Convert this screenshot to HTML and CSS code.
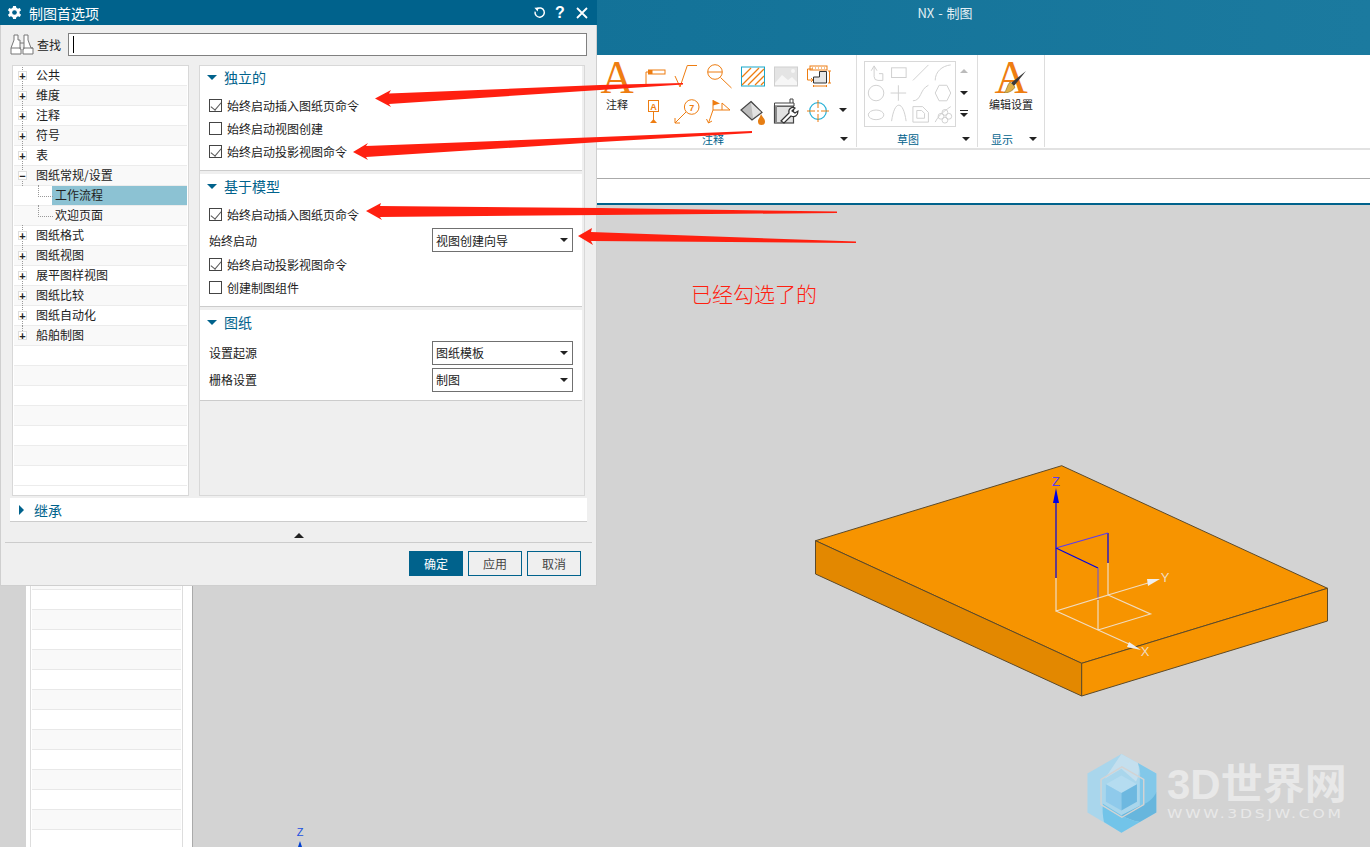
FILE: index.html
```html
<!DOCTYPE html>
<html lang="zh-CN">
<head>
    <meta charset="UTF-8">
    <meta name="viewport" content="width=device-width, initial-scale=1.0">
    <title>NX - 制图</title>
    <link rel="stylesheet" href="styles.css">
</head>
<body>
    <div class="app">
        <div class="titlebar">NX - 制图</div>

        <div class="ribbon">
            <div class="group group-notes">
                <div class="group-body">
                    <div class="big-tool notes-tool">
                        <span class="big-a">A</span>
                        <span class="tool-label">注释</span>
                    </div>
                    <div class="tool-grid">
                        <svg class="tool" viewBox="0 0 33 35"><rect x="11.5" y="11" width="16.5" height="4" fill="#fff" stroke="#ee7d11"/><rect x="11.5" y="11" width="4" height="4" fill="#ee7d11"/><path d="M11 13H9V26M5 25.5H13" fill="none" stroke="#ee7d11"/></svg>
                        <svg class="tool" viewBox="0 0 33 35"><path d="M5 17L10 28L17.3 6.5H27" fill="none" stroke="#ee7d11"/></svg>
                        <svg class="tool" viewBox="0 0 33 35"><circle cx="12" cy="13" r="7.3" fill="none" stroke="#ee7d11"/><path d="M5 13H19M17.500 18.500L28.500 29" fill="none" stroke="#ee7d11"/></svg>
                        <svg class="tool" viewBox="0 0 33 35"><rect x="5.500" y="8" width="23" height="19" fill="#fff" stroke="#19a7c9"/><path d="M6 18L15 9M6 26L23 9M12 26L28 10M19 26L28 17M25 26L28 23" stroke="#ee7d11" stroke-width="1.300"/></svg>
                        <svg class="tool" viewBox="0 0 33 35"><rect x="5.500" y="8" width="23" height="19" fill="#e4e4e4" stroke="#cfcfcf"/><path d="M6 24L13 16L19 21L23 18L28 23V26H6Z" fill="#f6f6f6"/><circle cx="24" cy="12" r="2" fill="#f6f6f6"/></svg>
                        <svg class="tool" viewBox="0 0 33 35"><rect x="8" y="7" width="17" height="4" fill="#fff" stroke="#ee7d11"/><path d="M10 9H11M13 9H14M16 9H17M19 9H20M22 9H23" stroke="#ee7d11"/><path d="M11 10H5.500V21H11M9 19L11 21L9 23" fill="none" stroke="#ee7d11"/><path d="M11.500 24V18H17.500V12.500H24.500V24Z" fill="#e6e6e6" stroke="#333"/><path d="M27.500 12V24M26 12H29M26 24H29M11.500 27H24.500M11.500 26V28M24.500 26V28" stroke="#ee7d11"/></svg>

                        <svg class="tool" viewBox="0 0 33 35"><rect x="11.500" y="6.500" width="10" height="11" fill="#fff" stroke="#ee7d11"/><text x="16.500" y="15.500" class="mini-text" text-anchor="middle">A</text><path d="M16.500 17.500V26" stroke="#ee7d11"/><path d="M13 29H20L16.500 25Z" fill="#ee7d11"/></svg>
                        <svg class="tool" viewBox="0 0 33 35"><circle cx="21.700" cy="13" r="7.300" fill="#fff" stroke="#ee7d11"/><text x="21.700" y="16.500" class="mini-text" text-anchor="middle">7</text><path d="M16 18L5 29M5 24V29H10" fill="none" stroke="#ee7d11"/></svg>
                        <svg class="tool" viewBox="0 0 33 35"><path d="M10 6L17 9.500L10 11.500Z" fill="#ee7d11"/><path d="M10 6V16L5.500 29M3.500 25L5.500 29L9 27M10 16H27L19 9V16" fill="none" stroke="#ee7d11"/></svg>
                        <svg class="tool" viewBox="0 0 33 35"><path d="M15 7.500L26 18.500L16 26L5 16Z" fill="#bdbdbd" stroke="#444" stroke-width="1.200"/><path d="M15 9L25 18L17 24Z" fill="#e2e2e2"/><path d="M25 20C27 24 29 25 29 27.500A3.500 3.500 0 0 1 22 27.500C22 25 24 24 25 20Z" fill="#e67e13"/></svg>
                        <svg class="tool" viewBox="0 0 33 35"><rect x="5.500" y="12" width="19" height="17" fill="#e2e2e2" stroke="#444" stroke-width="1.200"/><path d="M5.500 12H25V9H5.500ZM21 9V5H24V9" fill="#fff" stroke="#444"/><path d="M7 12V29" stroke="#888" stroke-width="2"/><path d="M12 27L20 19C19 15 23 12 26 14L23 17L26 19L29 17C29 21 26 24 22 22L15 29Z" fill="#fff" stroke="#333" stroke-width="1.200"/></svg>
                        <svg class="tool" viewBox="0 0 33 35"><circle cx="16" cy="17" r="8.300" fill="none" stroke="#27b0d6" stroke-width="1.200"/><path d="M5 17H13M19 17H27M16 6V14M16 20V28M15 17H17" stroke="#ee7d11"/></svg>
                        <span class="caret more-caret"></span>
                    </div>
                </div>
                <div class="group-label notes-label"><span>注释</span><span class="caret"></span></div>
            </div>

            <div class="group group-sketch">
                <div class="group-body">
                    <svg class="gallery" viewBox="0 0 92 66">
                        <g fill="none" stroke="#cfcfcf">
                            <path d="M9 5V15Q9 19 13 19H18V12H14M6 9L9 4L12 9"/>
                            <rect x="27" y="6" width="15" height="10"/>
                            <path d="M49 19L65 3"/>
                            <path d="M72 19C72 10 79 4 88 3"/>
                            <circle cx="11" cy="32" r="8"/>
                            <path d="M26 32H42M34 24V40"/>
                            <path d="M49 40C58 40 56 28 65 24"/>
                            <path d="M76 24H84L88 32L84 40H76L72 32Z"/>
                            <ellipse cx="11" cy="54.500" rx="8" ry="5"/>
                            <path d="M27 61C30 39 39 39 42 61"/>
                            <path d="M49 46H59L65 52V62H49ZM53 50H58L61 53V58H53Z"/>
                            <path d="M72 62C75 56 79 52 88 46"/>
                            <circle cx="82" cy="52" r="3"/><circle cx="86" cy="56" r="3"/><circle cx="78" cy="56" r="3"/><circle cx="82" cy="60" r="3"/>
                        </g>
                    </svg>
                    <div class="gallery-scroll">
                        <span class="caret caret-up"></span>
                        <span class="caret"></span>
                        <span class="caret caret-line"></span>
                    </div>
                </div>
                <div class="group-label sketch-label"><span>草图</span><span class="caret"></span></div>
            </div>

            <div class="group group-display">
                <div class="group-body">
                    <div class="big-tool display-tool">
                        <div class="brush-a">
                            <span class="big-a">A</span>
                            <svg class="brush" viewBox="0 0 22 22"><path d="M22 0L7 12L10 15Z" fill="#3a3a3a"/><path d="M6 11L11 16C9 20 4 22 0 22C3 19 3 14 6 11Z" fill="#e0b24a" stroke="#8a6a20" stroke-width=".6"/></svg>
                        </div>
                        <span class="tool-label">编辑设置</span>
                    </div>
                </div>
                <div class="group-label display-label"><span>显示</span><span class="caret"></span></div>
            </div>
        </div>

        <div class="toolbar-row"></div>
        <div class="toolbar-row short"></div>

        <div class="workspace">
            <div class="side">
                <div class="side-list"></div>
            </div>
        </div>
    </div>

    <svg class="part" viewBox="0 0 1370 847">
        <polygon points="815.500,540.700 1061.700,465.700 1327.500,588.300 1081.700,663.300" fill="#f79400" stroke="#5c4a2a"/>
        <polygon points="815.500,540.700 1081.700,663.300 1081.700,696 815.500,574" fill="#e38800" stroke="#5c4a2a"/>
        <polygon points="1081.700,663.300 1327.500,588.300 1327.500,621 1081.700,696" fill="#f79400" stroke="#5c4a2a"/>
        <g fill="none" stroke-width="1.200">
            <path d="M1056 503V578M1108 563V533" stroke="#0000e6"/>
            <path d="M1056 548L1108 533" stroke="#5a3cf0"/>
            <path d="M1056 548L1098 568" stroke="#0000e6"/>
            <path d="M1098 568V600" stroke="#7a5cc0"/>
            <path d="M1056 578V611L1108 595V563M1098 600V630M1056 611L1098 630L1129 644M1108 595L1150.500 614L1098 630M1108 595L1148 583" stroke="#f0dcc0"/>
        </g>
        <path d="M1056 488L1059 503H1053Z" fill="#0000e6"/>
        <path d="M1160 579L1147 579L1148 586Z" fill="#eee"/>
        <path d="M1141 650L1129 642L1127 647Z" fill="#eee"/>
        <text x="1056" y="486" class="axis axis-z" text-anchor="middle">Z</text>
        <text x="1165" y="582" class="axis axis-w" text-anchor="middle">Y</text>
        <text x="1145" y="656" class="axis axis-w" text-anchor="middle">X</text>
        <text x="300" y="836" class="axis axis-low" text-anchor="middle">Z</text>
        <path d="M300 841L303 850H297Z" fill="#0040d0"/>
    </svg>

    <p class="remark">已经勾选了的</p>

    <div class="watermark">
        <svg class="wm-logo" viewBox="0 0 100 107">
            <polygon points="53,12.700 89,33 89,73 53,94 18,73 18,33" fill="#a9d6ec"/>
            <path d="M53 12.700L70 22C72 30 71 36 68 41L53 28L36 38Z" fill="#c4dfee"/>
            <path d="M70 22L89 33V52C86 62 78 68 72 70L72 38C73 32 72 27 70 22Z" fill="#82c8e9"/>
            <path d="M89 52V73L72 83C65 82 58 79 53 76L72 66C80 64 86 59 89 52Z" fill="#67b6dd"/>
            <path d="M34 64L53 76C58 79 65 82 72 83L53 94L35 83C34 77 33 70 34 64Z" fill="#72c4e9"/>
            <polygon points="53.500,26 76,39 76,65 53.500,78 32,65 32,39" fill="none" stroke="#d3d3d3" stroke-width="1.500"/>
            <polygon points="53,35 69,44 53,53 37,44" fill="#b5dcf0"/>
            <polygon points="37,44 53,53 53,71 37,62" fill="#8fcaeb"/>
            <polygon points="69,44 69,62 53,71 53,53" fill="#6db8e0"/>
        </svg>
        <div class="wm-text">
            <div class="wm-name">3D世界网</div>
            <div class="wm-url">WWW.3DSJW.COM</div>
        </div>
    </div>

    <div class="dialog">
        <div class="dialog-title">
            <svg class="gear" viewBox="0 0 16 16"><path d="M6.500 1H9.500L10 3L11.700 3.900L13.600 3.100L15 5.700L13.400 7V9L15 10.300L13.600 12.900L11.700 12.100L10 13L9.500 15H6.500L6 13L4.300 12.100L2.400 12.900L1 10.300L2.600 9V7L1 5.700L2.400 3.100L4.300 3.900L6 3Z" fill="#fff"/><circle cx="8" cy="8" r="2.500" fill="#00628c"/></svg>
            <span class="dialog-name">制图首选项</span>
            <svg class="title-icon reset" viewBox="0 0 14 14"><path d="M4 3.200A5 5 0 1 1 2.300 6" fill="none" stroke="#fff" stroke-width="1.600"/><path d="M1.500 2L6 1.500L5 6Z" fill="#fff"/></svg>
            <span class="help">?</span>
            <svg class="title-icon close" viewBox="0 0 12 12"><path d="M1 1L11 11M11 1L1 11" stroke="#fff" stroke-width="1.800"/></svg>
        </div>

        <div class="search">
            <svg class="binoculars" viewBox="0 0 24 22"><path d="M4 2H8V7H10V16H11V21H1V15L4 7ZM14 2H18V7L21 15L23 15V21H13V16H14V7Z M10 10H14" fill="#fff" stroke="#777"/><path d="M1 15H11M13 15H23" stroke="#777"/></svg>
            <span class="search-label">查找</span>
            <div class="search-box"><span class="text-cursor"></span></div>
        </div>

        <div class="panes">
            <div class="tree">
                <div class="tree-row"><span class="twig"><span class="toggle">+</span></span>公共</div>
                <div class="tree-row alt"><span class="twig"><span class="toggle">+</span></span>维度</div>
                <div class="tree-row"><span class="twig"><span class="toggle">+</span></span>注释</div>
                <div class="tree-row alt"><span class="twig"><span class="toggle">+</span></span>符号</div>
                <div class="tree-row"><span class="twig"><span class="toggle">+</span></span>表</div>
                <div class="tree-row alt"><span class="twig"><span class="toggle">−</span></span>图纸常规/设置</div>
                <div class="tree-row child"><span class="elbow"></span><span class="leaf selected">工作流程</span></div>
                <div class="tree-row child alt"><span class="elbow last"></span><span class="leaf">欢迎页面</span></div>
                <div class="tree-row"><span class="twig"><span class="toggle">+</span></span>图纸格式</div>
                <div class="tree-row alt"><span class="twig"><span class="toggle">+</span></span>图纸视图</div>
                <div class="tree-row"><span class="twig"><span class="toggle">+</span></span>展平图样视图</div>
                <div class="tree-row alt"><span class="twig"><span class="toggle">+</span></span>图纸比较</div>
                <div class="tree-row"><span class="twig"><span class="toggle">+</span></span>图纸自动化</div>
                <div class="tree-row alt"><span class="twig end"><span class="toggle">+</span></span>船舶制图</div>
                <div class="tree-row"></div>
                <div class="tree-row alt"></div>
                <div class="tree-row"></div>
                <div class="tree-row alt"></div>
                <div class="tree-row"></div>
                <div class="tree-row alt"></div>
                <div class="tree-row"></div>
            </div>

            <div class="settings">
                <section class="block block-first">
                    <h3 class="block-head"><span class="fold"></span>独立的</h3>
                    <label class="check-row"><span class="check on"></span>始终启动插入图纸页命令</label>
                    <label class="check-row"><span class="check"></span>始终启动视图创建</label>
                    <label class="check-row"><span class="check on"></span>始终启动投影视图命令</label>
                </section>
                <section class="block block-model">
                    <h3 class="block-head"><span class="fold"></span>基于模型</h3>
                    <label class="check-row"><span class="check on"></span>始终启动插入图纸页命令</label>
                    <div class="field-row tall"><span>始终启动</span><div class="select">视图创建向导<span class="caret"></span></div></div>
                    <label class="check-row"><span class="check on"></span>始终启动投影视图命令</label>
                    <label class="check-row"><span class="check"></span>创建制图组件</label>
                </section>
                <section class="block block-sheet">
                    <h3 class="block-head"><span class="fold"></span>图纸</h3>
                    <div class="field-row"><span>设置起源</span><div class="select">图纸模板<span class="caret"></span></div></div>
                    <div class="field-row"><span>栅格设置</span><div class="select">制图<span class="caret"></span></div></div>
                </section>
            </div>
        </div>

        <div class="inherit"><span class="fold-right"></span>继承</div>
        <div class="collapse"><span class="caret caret-up dark"></span></div>
        <div class="actions">
            <button class="btn primary">确定</button>
            <button class="btn">应用</button>
            <button class="btn">取消</button>
        </div>
    </div>

    <svg class="arrows" viewBox="0 0 1370 847">
        <polygon points="375,98.500 391,90 389,93.500 600,85 683,83 683,84.500 600,90 389,104 391,107" fill="#ff2010"/>
        <polygon points="353,152 368,143 366,146 600,137 752,131 752,133 600,142 366,157 368,160" fill="#ff2010"/>
        <polygon points="366,211 381,203 380,206 600,208 837,211.500 837,213 600,215 380,217 382,220" fill="#ff2010"/>
        <polygon points="578,236 592,228 591,232 856,241.500 856,243 591,241 593,245" fill="#ff2010"/>
    </svg>
</body>
</html>
```

FILE: styles.css
```css
* {
    margin: 0;
    padding: 0;
    box-sizing: border-box;
}

body {
    position: relative;
    width: 1370px;
    height: 847px;
    overflow: hidden;
    font-family: "Noto Sans CJK SC", "Noto Sans", sans-serif;
    font-size: 12px;
    color: #222;
    background: #d3d3d3;
}

.app {
    display: flex;
    flex-direction: column;
    height: 847px;
}

.titlebar {
    height: 55px;
    padding: 4px 0 0 520px;
    font-size: 13px;
    word-spacing: 1px;
    line-height: 18px;
    text-align: center;
    color: #e3eff4;
    background: linear-gradient(90deg, #0d6c93, #1b7a9f);
}

.ribbon {
    display: flex;
    height: 95px;
    padding-left: 597px;
    font-size: 11px;
    background: #fff;
    border-bottom: 2px solid #e2e2e2;
}

.group {
    display: flex;
    flex-direction: column;
    border-right: 1px solid #ddd;
    height: 92px;
}

.group-notes { width: 260px; }
.group-sketch { width: 121px; }
.group-display { width: 67px; }

.group-body {
    display: flex;
    height: 76px;
}

.group-label {
    display: flex;
    align-items: center;
    height: 15px;
    color: #00628c;
}

.group-label .caret {
    margin-left: auto;
}

.notes-label { padding: 0 8px 0 105px; }
.sketch-label { padding: 0 7px 0 40px; }
.display-label { padding: 0 7px 0 13px; }

.big-tool {
    display: flex;
    flex-direction: column;
    align-items: center;
}

.notes-tool {
    width: 40px;
}

.display-tool {
    width: 66px;
}

.big-a {
    display: block;
    height: 39px;
    margin-top: 3px;
    font-family: "Liberation Serif", serif;
    font-size: 46px;
    line-height: 40px;
    color: #ee7d11;
}

.tool-label {
    line-height: 14px;
}

.brush-a {
    position: relative;
    height: 42px;
}

.brush {
    position: absolute;
    left: 10px;
    top: 16px;
    width: 22px;
    height: 22px;
}

.tool-grid {
    display: grid;
    grid-template-columns: repeat(6, 33px) 15px;
    grid-auto-rows: 35px;
    padding-top: 4px;
}

.tool {
    display: block;
    width: 33px;
    height: 35px;
}

.tool:nth-child(7) {
    grid-column: 1;
}

.mini-text {
    font-family: "Liberation Sans", sans-serif;
    font-size: 9px;
    font-weight: 700;
    fill: #ee7d11;
}

.more-caret {
    align-self: center;
    justify-self: center;
    margin-bottom: 4px;
}

.caret {
    display: inline-block;
    width: 0;
    height: 0;
    border-left: 4px solid transparent;
    border-right: 4px solid transparent;
    border-top: 4px solid #222;
}

.caret-up {
    border-top: 0;
    border-bottom: 4px solid #bbb;
}

.caret-up.dark {
    border-left-width: 5px;
    border-right-width: 5px;
    border-bottom: 5px solid #222;
}

.caret-line {
    position: relative;
}

.caret-line::before {
    content: "";
    position: absolute;
    left: -4px;
    top: -7px;
    width: 8px;
    height: 1px;
    background: #222;
}

.gallery {
    display: block;
    width: 92px;
    height: 66px;
    margin: 6px 0 0 7px;
    border: 1px solid #d8d8d8;
}

.gallery-scroll {
    display: flex;
    flex-direction: column;
    align-items: center;
    justify-content: space-between;
    width: 14px;
    height: 48px;
    margin: 14px 0 0 1px;
}

.toolbar-row {
    height: 29px;
    background: #fff;
    border-bottom: 1px solid #aaa;
}

.toolbar-row.short {
    height: 26px;
    border-bottom: 2px solid #00628c;
}

.workspace {
    flex: 1;
    padding-left: 26px;
    display: flex;
    overflow: hidden;
}

.side {
    width: 167px;
    padding: 0 9px 0 4px;
    background: #fff;
    border-right: 1px solid #aaa;
}

.side-list {
    height: 100%;
    padding: 4px 1px 0;
    border: 1px solid #ddd;
    border-width: 0 1px;
    background-color: #fff;
    background-clip: content-box;
    background-origin: content-box;
    background-image: repeating-linear-gradient(180deg, #e8e8e8 0, #e8e8e8 1px, #f9f9f9 1px, #f9f9f9 20px, #e8e8e8 20px, #e8e8e8 21px, #fff 21px, #fff 40px);
}

.part,
.arrows {
    position: absolute;
    left: 0;
    top: 0;
    width: 1370px;
    height: 847px;
}

.axis {
    font-family: "Liberation Sans", sans-serif;
    font-size: 13px;
}

.axis-z { fill: #5a3cf0; }
.axis-w { fill: #f0dcc0; }
.axis-low { fill: #2050e0; font-size: 11px; }

.remark {
    position: absolute;
    left: 691px;
    top: 278px;
    font-size: 21px;
    line-height: 30px;
    font-weight: 300;
    color: #ff2010;
}

.watermark {
    position: absolute;
    left: 1070px;
    top: 740px;
    display: flex;
}

.wm-logo {
    display: block;
    width: 97px;
    height: 107px;
}

.wm-name {
    font-family: "Liberation Sans", "Noto Sans CJK SC", sans-serif;
    font-size: 42px;
    font-weight: 700;
    line-height: 42px;
    margin-top: 24px;
    color: #e8e8e8;
    white-space: nowrap;
}

.wm-url {
    font-family: "DejaVu Sans", sans-serif;
    font-size: 12px;
    letter-spacing: 2.1px;
    line-height: 16px;
    color: #e8e8e8;
    white-space: nowrap;
    transform: scaleX(1.3);
    transform-origin: left center;
}

.dialog {
    position: absolute;
    left: 0;
    top: 0;
    display: flex;
    flex-direction: column;
    width: 597px;
    height: 586px;
    background: #efefef;
    border: 1px solid #cfcfcf;
    border-top: 0;
}

.dialog-title {
    display: flex;
    align-items: center;
    flex: none;
    height: 25px;
    margin: 0 -1px;
    padding-left: 7px;
    color: #fff;
    background: #00628c;
}

.gear {
    width: 15px;
    height: 15px;
}

.dialog-name {
    margin-left: 7px;
    font-size: 14px;
}

.title-icon {
    display: block;
}

.reset {
    width: 13px;
    height: 13px;
    margin-left: auto;
}

.help {
    width: 12px;
    margin: 0 10px 0 8px;
    font-family: "Liberation Sans", sans-serif;
    font-size: 16px;
    font-weight: 700;
    text-align: center;
}

.close {
    width: 12px;
    height: 12px;
    margin-right: 9px;
}

.search {
    display: flex;
    align-items: center;
    flex: none;
    height: 40px;
    padding: 0 9px 2px;
}

.binoculars {
    width: 24px;
    height: 22px;
}

.search-label {
    width: 34px;
    padding-left: 3px;
}

.search-box {
    display: flex;
    align-items: center;
    flex: 1;
    height: 23px;
    padding-left: 4px;
    background: #fff;
    border: 1px solid #808080;
}

.text-cursor {
    width: 1px;
    height: 17px;
    background: #000;
}

.panes {
    display: flex;
    gap: 10px;
    flex: none;
    height: 431px;
    padding: 0 11px;
}

.tree {
    width: 177px;
    padding: 0 1px;
    background: #fff;
    border: 1px solid #d8d8d8;
    overflow: hidden;
}

.tree-row {
    display: flex;
    align-items: center;
    height: 20px;
    padding-bottom: 2px;
    border-bottom: 1px solid #ececec;
    white-space: nowrap;
}

.tree-row.alt {
    background: #f9f9f9;
}

.twig {
    position: relative;
    display: flex;
    flex: none;
    align-items: center;
    width: 22px;
    height: 20px;
    margin-top: 2px;
    padding-left: 4px;
}

.twig::before {
    content: "";
    position: absolute;
    left: 8px;
    top: -1px;
    height: 21px;
    border-left: 1px dotted #999;
}

.twig.end::before {
    height: 10px;
}

.toggle {
    position: relative;
    width: 9px;
    height: 9px;
    font-family: "Liberation Sans", sans-serif;
    font-size: 11px;
    font-weight: 700;
    line-height: 8px;
    text-align: center;
    background: #fff;
    border: 1px solid #ddd;
}

.tree-row.child {
    padding: 0 0 0 14px;
}

.elbow {
    position: relative;
    flex: none;
    width: 24px;
    height: 20px;
}

.elbow::before {
    content: "";
    position: absolute;
    left: 10px;
    top: -1px;
    width: 14px;
    height: 11px;
    border-left: 1px dotted #999;
    border-bottom: 1px dotted #999;
}

.leaf {
    flex: 1;
    height: 19px;
    padding-left: 3px;
    line-height: 18px;
}

.leaf.selected {
    background: #8cc2d3;
}

.settings {
    flex: 1;
    padding: 0 2px 0 0;
    background: #efefef;
    border: 1px solid #d8d8d8;
}

.block {
    background: #fff;
    border-bottom: 1px solid #ccc;
    padding-left: 9px;
}

.block-first { height: 105px; margin-bottom: 3px; }
.block-model { height: 133px; margin-bottom: 3px; }
.block-sheet { height: 91px; }

.block-head {
    display: flex;
    align-items: center;
    height: 24px;
    padding-bottom: 2px;
    margin-bottom: 4px;
    font-size: 14px;
    font-weight: 400;
    color: #00628c;
}

.block-model .block-head { height: 26px; margin-bottom: 3px; }
.block-sheet .block-head { height: 26px; margin-bottom: 3px; }

.fold {
    width: 0;
    height: 0;
    margin-right: 7px;
    margin-left: -2px;
    border-left: 5px solid transparent;
    border-right: 5px solid transparent;
    border-top: 5px solid #00628c;
}

.check-row {
    display: flex;
    align-items: center;
    height: 23px;
    white-space: nowrap;
}

.check {
    position: relative;
    flex: none;
    width: 13px;
    height: 13px;
    margin-right: 5px;
    background: #fff;
    border: 1px solid #444;
}

.check.on::after {
    content: "";
    position: absolute;
    left: 3px;
    top: 0;
    width: 5px;
    height: 9px;
    border: solid #555;
    border-width: 0 1px 1px 0;
    transform: rotate(40deg);
}

.field-row {
    display: flex;
    align-items: center;
    justify-content: space-between;
    height: 27px;
    padding-right: 9px;
}

.field-row.tall {
    height: 26px;
    margin-top: 1px;
}

.select {
    display: flex;
    align-items: center;
    justify-content: space-between;
    width: 141px;
    height: 24px;
    padding: 0 4px 0 3px;
    background: #fff;
    border: 1px solid #707070;
}

.inherit {
    display: flex;
    align-items: center;
    flex: none;
    height: 24px;
    margin: 2px 9px 0;
    font-size: 14px;
    color: #00628c;
    background: #fff;
    border-bottom: 1px solid #ccc;
}

.fold-right {
    width: 0;
    height: 0;
    margin: 0 10px 0 9px;
    border-top: 5px solid transparent;
    border-bottom: 5px solid transparent;
    border-left: 5px solid #00628c;
}

.collapse {
    display: flex;
    align-items: center;
    justify-content: center;
    flex: none;
    height: 21px;
    padding-top: 7px;
    margin: 0 4px;
    border-bottom: 1px solid #ccc;
}

.actions {
    display: flex;
    justify-content: flex-end;
    gap: 5px;
    padding: 8px 15px 0 0;
}

.btn {
    width: 54px;
    height: 25px;
    font-family: inherit;
    font-size: 12px;
    color: #444;
    background: #efefef;
    border: 1px solid #00628c;
}

.btn.primary {
    color: #fff;
    background: #00628c;
}
```
